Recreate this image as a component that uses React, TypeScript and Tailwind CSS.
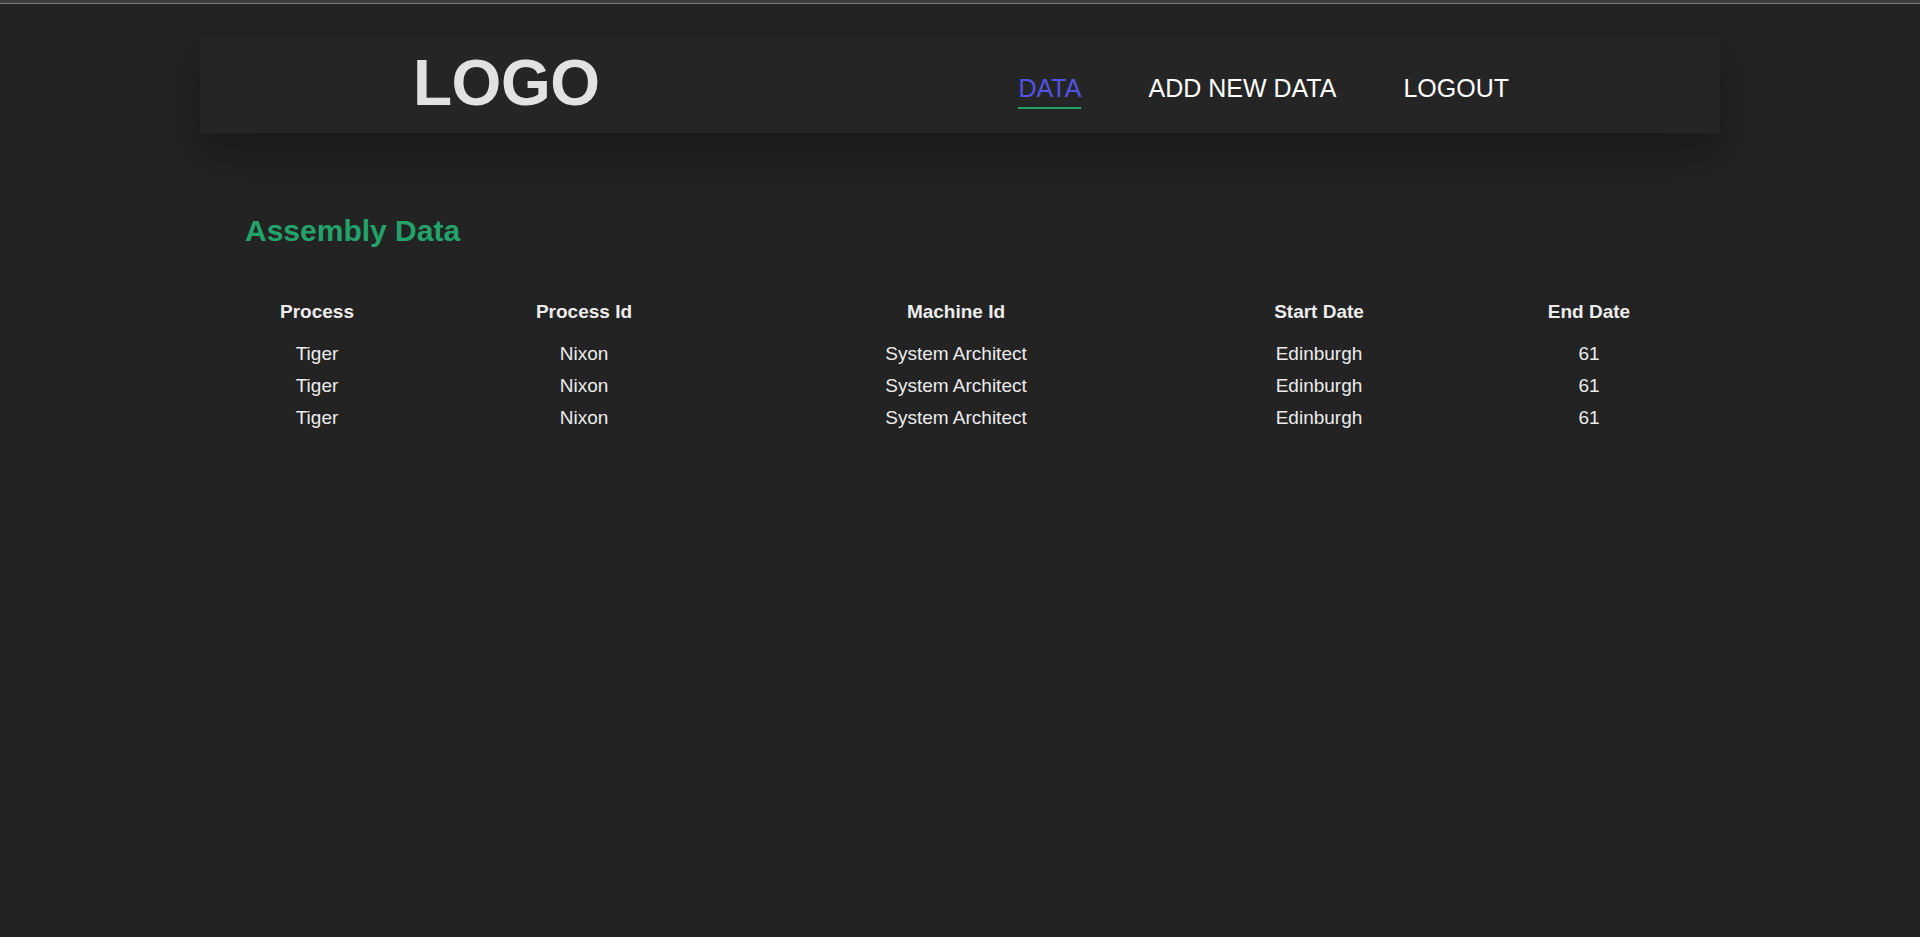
import React from 'react';

const columns = ['Process', 'Process Id', 'Machine Id', 'Start Date', 'End Date'];

const rows = [
  ['Tiger', 'Nixon', 'System Architect', 'Edinburgh', '61'],
  ['Tiger', 'Nixon', 'System Architect', 'Edinburgh', '61'],
  ['Tiger', 'Nixon', 'System Architect', 'Edinburgh', '61'],
];

function Header() {
  return (
    <header className="mt-[32px] h-[97px] bg-[#252525] shadow-[0_20px_50px_rgba(0,0,0,0.3)] flex items-center justify-between pl-[213px] pr-[211px]">
      <div className="text-[64px] font-bold leading-none text-[#e2e2e2] tracking-[-0.5px] mt-[-4px]">LOGO</div>
      <nav className="flex items-center gap-[67px] text-[25px] leading-none mt-[16px]">
        <a className="text-[#5254e6] pb-[6px] border-b-[2px] border-[#22a36a] cursor-pointer">DATA</a>
        <a className="text-white pb-[8px] cursor-pointer">ADD NEW DATA</a>
        <a className="text-white pb-[8px] cursor-pointer">LOGOUT</a>
      </nav>
    </header>
  );
}

export default function App() {
  return (
    <div className="min-h-[937px] bg-[#232323] font-['Liberation_Sans',Arial,sans-serif]">
      <div className="h-[4px] bg-[#3b3c41] border-b border-[#7c7c7c]" />
      <div className="w-[1520px] mx-auto">
        <Header />
        <main className="px-[45px]">
          <h1 className="mt-[83px] text-[30px] font-bold leading-[30px] text-[#22a36a]">Assembly Data</h1>
          <div className="mt-[50px] w-[1428px]">
            <div className="grid grid-cols-[144px_390px_354px_372px_168px] h-[32px] items-center text-center text-[19px] font-bold text-[#ececec]">
              {columns.map((c) => (
                <div key={c}>{c}</div>
              ))}
            </div>
            <div className="mt-[10px]">
              {rows.map((r, i) => (
                <div key={i} className="grid grid-cols-[144px_390px_354px_372px_168px] h-[32px] items-center text-center text-[19px] text-[#ececec]">
                  {r.map((cell, j) => (
                    <div key={j}>{cell}</div>
                  ))}
                </div>
              ))}
            </div>
          </div>
        </main>
      </div>
    </div>
  );
}
